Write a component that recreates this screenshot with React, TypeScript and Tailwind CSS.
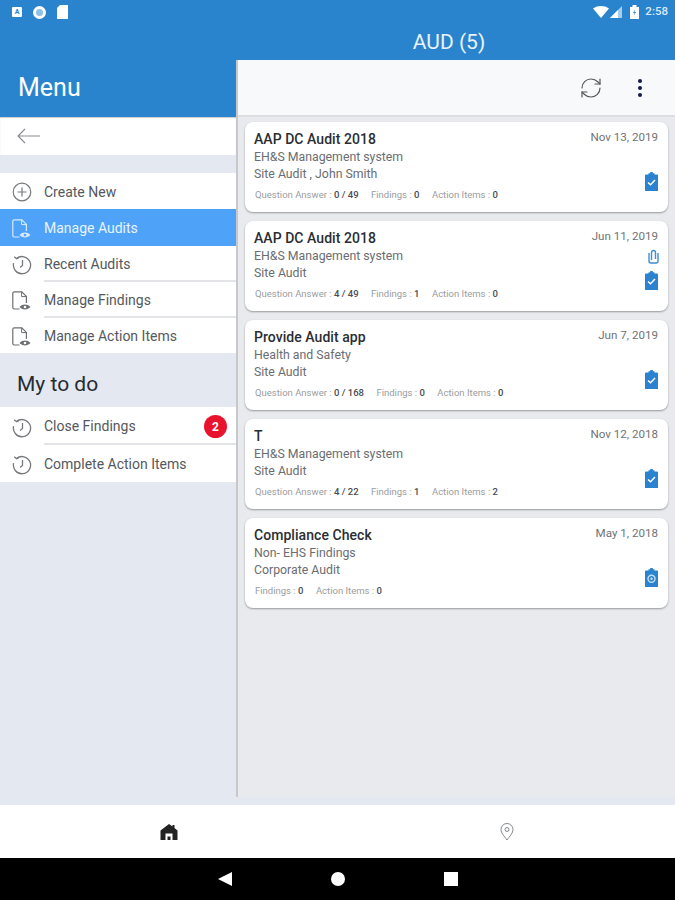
import { RefreshCw } from "lucide-react";

const font = { fontFamily: "Roboto, sans-serif" };

function Plus() {
  return (
    <svg width="20" height="20" viewBox="0 0 20 20" fill="none" stroke="#77797c" strokeWidth="1.2">
      <circle cx="10" cy="10" r="8.8" />
      <path d="M10 5.500v9M5.500 10h9" />
    </svg>
  );
}

function Clock() {
  return (
    <svg width="20" height="20" viewBox="0 0 20 20" fill="none" stroke="#77797c" strokeWidth="1.3">
      <path d="M4.400 3.600A8.600 8.600 0 1 1 1.600 8.200" />
      <path d="M2.200 1.800l2.400 2 2-.8" />
      <path d="M10.500 5v5.500l-2.500 2" />
    </svg>
  );
}

function DocEye({ color = "#6c6f73", eye = "#6c6f73", hole = "#fff" }: { color?: string; eye?: string; hole?: string }) {
  return (
    <svg width="19" height="20" viewBox="0 0 19 20" fill="none">
      <path
        d="M7.500 18H2.200a1.400 1.400 0 0 1-1.400-1.400V2.200A1.400 1.400 0 0 1 2.200.8h7.600l4.600 4.600v6.600"
        stroke={color}
        strokeWidth="1.200"
      />
      <path d="M9.600.8v4.800h4.800" stroke={color} strokeWidth="1" />
      <path d="M7.500 16c2.800-3.300 8-3.300 11 0-3 3.300-8.200 3.300-11 0z" fill={eye} />
      <circle cx="13" cy="16" r="1.300" fill={hole} />
    </svg>
  );
}

function Clipboard({ mark = "check" }: { mark?: "check" | "dot" }) {
  return (
    <svg width="13" height="19" viewBox="0 0 13 19">
      <path d="M0 3.500q0-1 1-1h2.500V1.200h1.700V0h2.600v1.200h1.700v1.300H12q1 0 1 1V19H0z" fill="#2b83cf" />
      {mark === "check" ? (
        <path d="M3 10.500l2.500 2.300 4.500-4.800" fill="none" stroke="#fff" strokeWidth="1.500" />
      ) : (
        <>
          <circle cx="6.500" cy="10.800" r="3.500" fill="none" stroke="#c4def4" strokeWidth="1.400" />
          <circle cx="6.500" cy="10.800" r="1.200" fill="#c4def4" />
        </>
      )}
    </svg>
  );
}

function Paperclip() {
  return (
    <svg width="11" height="15" viewBox="0 0 11 15" fill="none" stroke="#3b8fd6" strokeWidth="1.400">
      <path d="M3.500 11V3.500a2 2 0 0 1 4 0V10" />
      <path d="M1 4v8a2 2 0 0 0 2 2h5a2 2 0 0 0 2-2V4" />
    </svg>
  );
}

type RowProps = {
  icon: React.ReactNode;
  label: string;
  active?: boolean;
  line?: boolean;
  badge?: string;
  className: string;
};

function MenuRow({ icon, label, active, line, badge, className }: RowProps) {
  return (
    <div className={`flex items-stretch ${className} ${active ? "bg-[#4ea3f8]" : "bg-white"}`}>
      <div className="w-[44px] flex items-center justify-center pr-[1px] pt-[2px]">{icon}</div>
      <div
        className={`flex-1 flex items-center justify-between pr-[9px] pt-[2px] text-[14px] ${
          active ? "text-[#e8f3fe]" : "text-[#55585c]"
        } ${line ? "border-b-2 border-[#e2e4e8]" : ""}`}
      >
        <span>{label}</span>
        {badge && (
          <span className="w-[23px] h-[23px] rounded-full bg-[#e8132d] text-white text-[12px] font-bold flex items-center justify-center">
            {badge}
          </span>
        )}
      </div>
    </div>
  );
}

type Stat = { label: string; value: string };

type Audit = {
  title: string;
  sub: string;
  type: string;
  date: string;
  stats: Stat[];
  clip?: boolean;
  mark?: "check" | "dot";
};

const audits: Audit[] = [
  {
    title: "AAP DC Audit 2018",
    sub: "EH&S Management system",
    type: "Site Audit , John Smith",
    date: "Nov 13, 2019",
    stats: [
      { label: "Question Answer", value: "0 / 49" },
      { label: "Findings", value: "0" },
      { label: "Action Items", value: "0" },
    ],
  },
  {
    title: "AAP DC Audit 2018",
    sub: "EH&S Management system",
    type: "Site Audit",
    date: "Jun 11, 2019",
    clip: true,
    stats: [
      { label: "Question Answer", value: "4 / 49" },
      { label: "Findings", value: "1" },
      { label: "Action Items", value: "0" },
    ],
  },
  {
    title: "Provide Audit app",
    sub: "Health and Safety",
    type: "Site Audit",
    date: "Jun 7, 2019",
    stats: [
      { label: "Question Answer", value: "0 / 168" },
      { label: "Findings", value: "0" },
      { label: "Action Items", value: "0" },
    ],
  },
  {
    title: "T",
    sub: "EH&S Management system",
    type: "Site Audit",
    date: "Nov 12, 2018",
    stats: [
      { label: "Question Answer", value: "4 / 22" },
      { label: "Findings", value: "1" },
      { label: "Action Items", value: "2" },
    ],
  },
  {
    title: "Compliance Check",
    sub: "Non- EHS Findings",
    type: "Corporate Audit",
    date: "May 1, 2018",
    mark: "dot",
    stats: [
      { label: "Findings", value: "0" },
      { label: "Action Items", value: "0" },
    ],
  },
];

function AuditCard({ audit }: { audit: Audit }) {
  return (
    <div className="h-[90px] bg-white rounded-[8px] shadow-[0_1px_2px_rgba(0,0,0,0.35)] pl-[9px] pr-[10px] pt-[9px] flex justify-between">
      <div className="flex flex-col">
        <div className="text-[14px] tracking-[0.05px] leading-[17px] font-medium text-[#2a2e33]">{audit.title}</div>
        <div className="text-[12.3px] leading-[17px] text-[#6a6d71] mt-[1px]">{audit.sub}</div>
        <div className="text-[12.3px] leading-[17px] text-[#6a6d71]">{audit.type}</div>
        <div className="flex gap-[12.5px] text-[9.5px] leading-[12px] text-[#9a9da0] mt-[6px] pl-[1px]">
          {audit.stats.map((s) => (
            <span key={s.label}>
              {s.label} : <span className="text-[#4a4d51] font-medium">{s.value}</span>
            </span>
          ))}
        </div>
      </div>
      <div className="flex flex-col items-end">
        <div className="text-[11.6px] leading-[14px] text-[#707377] -mt-[1px]">{audit.date}</div>
        <div className="flex-1 flex flex-col items-end justify-end pb-[21px] gap-[7px]">
          {audit.clip && (
            <span className="-mr-[1px]">
              <Paperclip />
            </span>
          )}
          <Clipboard mark={audit.mark} />
        </div>
      </div>
    </div>
  );
}

export default function App() {
  return (
    <div className="w-[675px] h-[900px] flex flex-col bg-[#e4e8f0] overflow-hidden" style={font}>
      {/* status bar + title */}
      <div className="h-[60px] bg-[#2a84cd] flex flex-col shrink-0">
        <div className="h-[24px] flex items-center justify-between pl-[12px] pr-[7px]">
          <div className="flex items-center gap-[11px]">
            <span className="w-[10px] h-[10px] bg-white rounded-[1px] text-[7px] font-bold text-[#2a84cd] flex items-center justify-center">
              A
            </span>
            <span className="w-[13px] h-[13px] rounded-full border-[3px] border-white bg-[#8fc0e8]" />
            <svg width="11" height="14" viewBox="0 0 11 14">
              <path d="M3 0h8v14H0V3z" fill="#fff" />
            </svg>
          </div>
          <div className="flex items-center">
            <svg width="16" height="12" viewBox="0 0 16 12">
              <path d="M0 2.500C4.500-.8 11.500-.8 16 2.500L8 12z" fill="#fff" />
            </svg>
            <svg width="12" height="12" viewBox="0 0 12 12" className="ml-[1px]">
              <path d="M0 12L12 0v12z" fill="#a9cdea" />
              <path d="M0 12L8 4v8z" fill="#fff" />
            </svg>
            <svg width="9" height="14" viewBox="0 0 9 14" className="ml-[8px]">
              <path d="M0 2h2.500V0h4v2H9v12H0z" fill="#fff" />
              <path d="M5 4.500L3 8h1.500L4 10.500 6 7H4.500z" fill="#2a84cd" />
            </svg>
            <span className="text-[11.5px] font-medium text-[#d8e9f7] ml-[6px]">2:58</span>
          </div>
        </div>
        <div className="flex">
          <div className="w-[236px]" />
          <div className="flex-1 text-center text-[21px] leading-[36px] pr-[13px] text-[#e9f3fb]">AUD (5)</div>
        </div>
      </div>

      <div className="flex-1 flex min-h-0">
        {/* left menu */}
        <div className="w-[236px] shrink-0 flex flex-col">
          <div className="h-[57px] bg-[#2a84cd] pl-[18px] pt-[10px] text-[25px] leading-[36px] text-white shrink-0">Menu</div>
          <div className="h-[38px] bg-white flex items-center pl-[17px] shrink-0 shadow-[inset_0_1px_1px_rgba(0,0,0,0.2)]">
            <svg width="24" height="16" viewBox="0 0 24 16" fill="none" stroke="#8c8e91" strokeWidth="1.2">
              <path d="M23 8H1M8 1L1 8l7 7" />
            </svg>
          </div>
          <div className="h-[18px] shrink-0" />
          <MenuRow icon={<Plus />} label="Create New" className="h-[36px]" />
          <MenuRow icon={<DocEye color="#d8e9fb" eye="#d8e9fb" hole="#4ea3f8" />} label="Manage Audits" active className="h-[37px]" />
          <MenuRow icon={<Clock />} label="Recent Audits" line className="h-[36px]" />
          <MenuRow icon={<DocEye />} label="Manage Findings" line className="h-[36px]" />
          <MenuRow icon={<DocEye />} label="Manage Action Items" className="h-[35px]" />
          <div className="h-[54px] shrink-0 pl-[17px] pt-[17px] text-[21px] leading-[28px] text-[#262b33]">My to do</div>
          <MenuRow icon={<Clock />} label="Close Findings" badge="2" line className="h-[38px] pt-[1px]" />
          <MenuRow icon={<Clock />} label="Complete Action Items" className="h-[37px]" />
        </div>

        {/* right panel */}
        <div className="flex-1 min-w-0 flex flex-col border-l-2 border-[#c6c8cb] mb-[8px]">
          <div className="h-[57px] shrink-0 bg-[#f7f9fb] border-b-2 border-[#dcdee1] flex items-center justify-end pr-[33px]">
            <RefreshCw size={24} strokeWidth={1.2} className="text-[#55585c] mr-[35px]" />
            <div className="flex flex-col gap-[3px]">
              <span className="w-[4px] h-[4px] rounded-full bg-[#141a4a]" />
              <span className="w-[4px] h-[4px] rounded-full bg-[#141a4a]" />
              <span className="w-[4px] h-[4px] rounded-full bg-[#141a4a]" />
            </div>
          </div>
          <div className="flex-1 flex flex-col gap-[9px] bg-[#e8eaee] px-[7px] pt-[5px]">
            {audits.map((a) => (
              <AuditCard key={a.title + a.date} audit={a} />
            ))}
          </div>
        </div>
      </div>

      {/* bottom tabs */}
      <div className="h-[53px] bg-white shrink-0 flex items-center">
        <div className="w-[338px] flex justify-center">
          <svg width="18" height="18" viewBox="0 0 18 18">
            <path d="M9 1l3.500 2.500V2h2v3l3 2.500V17H0.500V7.500z" fill="#222" />
            <path d="M5.500 17v-6.500h7V17h-2v-3.500h-3V17z" fill="#fff" />
          </svg>
        </div>
        <div className="flex-1 flex justify-center">
          <svg width="14" height="18" viewBox="0 0 14 18" fill="none" stroke="#85888b" strokeWidth="1">
            <path d="M7 17C4 13 1 10 1 6.500a6 6 0 0 1 12 0C13 10 10 13 7 17z" />
            <circle cx="7" cy="6.500" r="2" />
          </svg>
        </div>
      </div>

      {/* android nav */}
      <div className="h-[42px] bg-black shrink-0 flex items-center justify-center gap-[99px]">
        <svg width="14" height="14" viewBox="0 0 14 14">
          <path d="M14 0v14L0 7z" fill="#fff" />
        </svg>
        <span className="w-[14px] h-[14px] rounded-full bg-white" />
        <span className="w-[14px] h-[14px] bg-white" />
      </div>
    </div>
  );
}
